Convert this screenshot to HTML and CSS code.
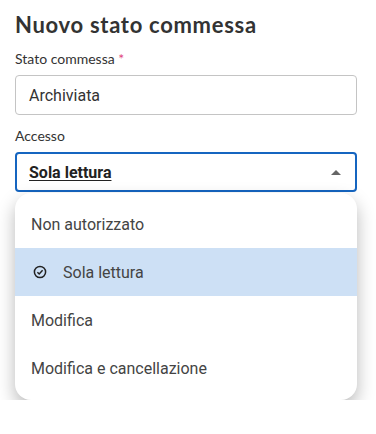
FILE: index.html
```html
<!DOCTYPE html>
<html lang="it">

<head>
    <meta charset="UTF-8">
    <meta name="viewport" content="width=device-width, initial-scale=1.0">
    <title>Nuovo stato commessa</title>
    <link rel="stylesheet" href="styles.css">
</head>

<body>
    <div class="form">
        <h1 class="title">Nuovo stato commessa</h1>

        <label class="label">Stato commessa <span class="req">*</span></label>
        <div class="field">Archiviata</div>

        <label class="label">Accesso</label>
        <div class="select">
            <span class="select-value">Sola lettura</span>
            <span class="arrow"></span>
        </div>

        <ul class="menu">
            <li>Non autorizzato</li>
            <li class="selected">
                <svg class="check" width="14" height="14" viewBox="0 0 14 14">
                    <circle cx="7" cy="7" r="5.6" fill="none" stroke="#222" stroke-width="1.5" />
                    <polyline points="4.4,7.2 6.2,9 9.6,5.3" fill="none" stroke="#222" stroke-width="1.5" />
                </svg>
                Sola lettura
            </li>
            <li>Modifica</li>
            <li>Modifica e cancellazione</li>
        </ul>
    </div>
</body>

</html>
```

FILE: styles.css
```css
* {
    margin: 0px;
    padding: 0px;
    box-sizing: border-box;
}

body {
    background: #fff;
    font-family: Roboto, "Liberation Sans", sans-serif;
    color: #333;
}

.form {
    padding: 11px 19px 0 15px;
    display: flex;
    flex-direction: column;
}

.title {
    font-family: Lato, "Noto Sans", sans-serif;
    font-size: 22px;
    font-weight: 700;
    line-height: 28px;
    color: #333;
    letter-spacing: 0.7px;
}

.label {
    font-family: Lato, "Noto Sans", sans-serif;
    font-size: 14px;
    line-height: 16px;
    color: #333;
    margin-top: 12px;
}

.req {
    color: #e0457b;
}

.field {
    margin-top: 8px;
    height: 40px;
    border: 1px solid #c4c4c4;
    border-radius: 4px;
    padding: 0 13px;
    display: flex;
    align-items: center;
    font-size: 16px;
    color: #333;
}

.field + .label {
    margin-top: 13px;
}

.label + .select {
    margin-top: 8px;
}

.select {
    height: 40px;
    border: 2px solid #1565c0;
    border-radius: 4px;
    padding: 0 12px;
    display: flex;
    align-items: center;
    justify-content: space-between;
}

.select-value {
    font-size: 16px;
    font-weight: 700;
    color: #222;
    text-decoration: underline;
    text-underline-offset: 2px;
}

.arrow {
    width: 0;
    height: 0;
    border-left: 5px solid transparent;
    border-right: 5px solid transparent;
    border-bottom: 5px solid #666;
    margin-right: 2px;
}

.menu {
    list-style: none;
    margin-top: 1px;
    padding: 7px 0 8px;
    background: #fff;
    border-radius: 16px;
    box-shadow: 0 8px 18px rgba(0, 0, 0, 0.28);
}

.menu li {
    height: 48px;
    display: flex;
    align-items: center;
    padding-left: 16px;
    font-size: 16px;
    color: #444;
}

.menu li.selected {
    background: #cde0f5;
    padding-left: 18px;
}

.check {
    margin-right: 16px;
}
```
